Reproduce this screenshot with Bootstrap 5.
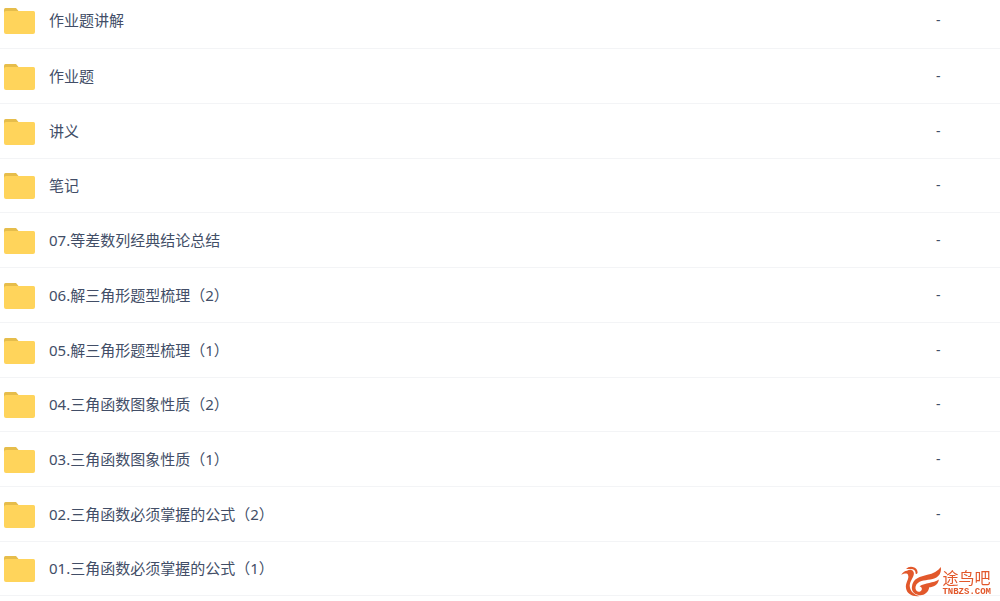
<!DOCTYPE html>
<html lang="zh-CN">
<head>
<meta charset="utf-8">
<meta name="viewport" content="width=device-width, initial-scale=1">
<title>文件列表</title>
<link href="https://cdn.jsdelivr.net/npm/bootstrap@5.3.0/dist/css/bootstrap.min.css" rel="stylesheet">
<style>
  body { font-family: "Noto Sans", "Noto Sans CJK SC", sans-serif; background: #fff; overflow: hidden; }
  /* the list is scrolled slightly, so its first row starts above the window */
  .file-list { margin-top: -7px; font-size: 15px; line-height: 22px; }
  .file-list td { height: 55px; padding: 0 4px; border-bottom: 1px solid #f3f4f6; color: #424e67; }
  .file-list tr:nth-child(4n) td, .file-list tr:last-child td { height: 54px; }
  .file-list .size-cell { width: 68px; font-size: 14px; }
  .file-list a { color: #424e67; }
  .folder { width: 31px; height: 28px; margin-right: 14px; padding-top: 2px; }
  .site-logo { color: #e2582b; right: 9px; bottom: 4px; }
  .site-logo svg { width: 41px; height: 31px; }
  .logo-name { font-size: 16px; line-height: 20px; }
  .logo-domain { font: bold 9px/9px "Liberation Mono", monospace; }
</style>
</head>
<body>
<svg class="d-none" aria-hidden="true">
  <symbol id="folder" viewBox="0 0 31 26">
    <path d="M0 7V1.500Q0 0 1.500 0H12L14.500 3V7z" fill="#e6bd4b"/>
    <path d="M0 5Q0 3 2 3H29.500Q31 3 31 4.500V24Q31 26 29 26H2Q0 26 0 24z" fill="#ffd45b"/>
  </symbol>
</svg>
<main>
  <table class="file-list table table-borderless align-middle">
    <tbody>
      <tr><td><a href="#" class="d-flex align-items-center text-decoration-none"><svg class="folder"><use href="#folder"/></svg>作业题讲解</a></td><td class="size-cell">-</td></tr>
      <tr><td><a href="#" class="d-flex align-items-center text-decoration-none"><svg class="folder"><use href="#folder"/></svg>作业题</a></td><td class="size-cell">-</td></tr>
      <tr><td><a href="#" class="d-flex align-items-center text-decoration-none"><svg class="folder"><use href="#folder"/></svg>讲义</a></td><td class="size-cell">-</td></tr>
      <tr><td><a href="#" class="d-flex align-items-center text-decoration-none"><svg class="folder"><use href="#folder"/></svg>笔记</a></td><td class="size-cell">-</td></tr>
      <tr><td><a href="#" class="d-flex align-items-center text-decoration-none"><svg class="folder"><use href="#folder"/></svg>07.等差数列经典结论总结</a></td><td class="size-cell">-</td></tr>
      <tr><td><a href="#" class="d-flex align-items-center text-decoration-none"><svg class="folder"><use href="#folder"/></svg>06.解三角形题型梳理（2）</a></td><td class="size-cell">-</td></tr>
      <tr><td><a href="#" class="d-flex align-items-center text-decoration-none"><svg class="folder"><use href="#folder"/></svg>05.解三角形题型梳理（1）</a></td><td class="size-cell">-</td></tr>
      <tr><td><a href="#" class="d-flex align-items-center text-decoration-none"><svg class="folder"><use href="#folder"/></svg>04.三角函数图象性质（2）</a></td><td class="size-cell">-</td></tr>
      <tr><td><a href="#" class="d-flex align-items-center text-decoration-none"><svg class="folder"><use href="#folder"/></svg>03.三角函数图象性质（1）</a></td><td class="size-cell">-</td></tr>
      <tr><td><a href="#" class="d-flex align-items-center text-decoration-none"><svg class="folder"><use href="#folder"/></svg>02.三角函数必须掌握的公式（2）</a></td><td class="size-cell">-</td></tr>
      <tr><td><a href="#" class="d-flex align-items-center text-decoration-none"><svg class="folder"><use href="#folder"/></svg>01.三角函数必须掌握的公式（1）</a></td><td class="size-cell"></td></tr>
    </tbody>
  </table>
</main>
<div class="site-logo position-fixed d-flex align-items-end">
  <svg viewBox="0 0 42 32" fill="currentColor" aria-hidden="true">
    <path d="M0 9Q3 5 6 5C10 2 14 5 13 9C12 13 8 17 9 22C10 27 14 30 19 31C12 32 6 29 5 23C4 17 9 13 7 9C6 7 3 8 0 9z"/>
    <path d="M5 3Q8 0 12 1Q17 2 17 7Q16 9 15 8Q15 3 10 3z"/>
    <path d="M11 22C12 12 20 11 27 9C33 8 38 5 41 1C42 9 37 13 30 14C24 15 17 15 15 21C14 25 17 28 20 26C22 25 22 22 19 21C25 17 33 18 39 14C38 20 33 22 29 22C28 28 23 31 18 30C13 29 11 26 11 22z"/>
  </svg>
  <div>
    <div class="logo-name">途鸟吧</div>
    <div class="logo-domain">TNBZS.COM</div>
  </div>
</div>
<script src="https://cdn.jsdelivr.net/npm/bootstrap@5.3.0/dist/js/bootstrap.bundle.min.js"></script>
</body>
</html>
